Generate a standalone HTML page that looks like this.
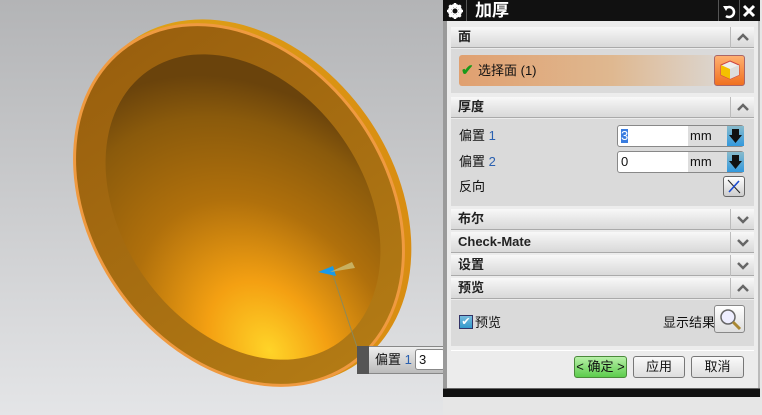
<!DOCTYPE html>
<html><head><meta charset="utf-8"><style>
*{margin:0;padding:0;box-sizing:border-box}
html,body{width:762px;height:415px;overflow:hidden}
body{position:relative;font-family:"Liberation Sans","Noto Sans CJK SC",sans-serif;font-size:13px;line-height:16px;color:#111;background:linear-gradient(#b3b4b6,#e4e5e7)}
.a{position:absolute}
.hdr{position:absolute;left:451px;width:303px;height:21px;background:linear-gradient(#f8f8f8,#e6e6e6 55%,#d9d9d9);border-bottom:1px solid #aaa;font-weight:bold;font-size:13px;line-height:20px;padding:0 0 0 7px;color:#222}
.hdr svg{position:absolute;right:0;top:0;border-left:1px solid #bbb}
.body{position:absolute;left:451px;width:303px;background:#dadada}
.in{position:absolute;background:#fff;border:1px solid #888;border-radius:3px;height:22px;width:127px}
.btn{position:absolute;top:356px;height:22px;border:1px solid #777;border-radius:3px;background:linear-gradient(#fafafa,#ddd);text-align:center;line-height:20px;font-size:13px}
</style></head><body>
<svg class="a" style="left:0;top:0" width="443" height="415">
<defs>
<radialGradient id="g1" cx="0.25" cy="0.9" r="0.9"><stop offset="0" stop-color="#ffd428"/><stop offset="0.25" stop-color="#f4a012"/><stop offset="0.55" stop-color="#b0700c"/><stop offset="0.85" stop-color="#8a5a0c"/><stop offset="1" stop-color="#6a430c"/></radialGradient>
<linearGradient id="side" x1="0" y1="0" x2="1" y2="1"><stop offset="0" stop-color="#e0aa1a"/><stop offset="1" stop-color="#d78810"/></linearGradient>
<linearGradient id="rim" x1="0" y1="0" x2="0" y2="1"><stop offset="0" stop-color="#9a600e"/><stop offset="1" stop-color="#b27a14"/></linearGradient>
</defs>
<ellipse cx="245" cy="202" rx="149" ry="197" transform="rotate(-35 245 202)" fill="url(#side)"/>
<ellipse cx="239" cy="205" rx="149" ry="196" transform="rotate(-35 239 205)" fill="#ef9a40"/>
<ellipse cx="239" cy="205" rx="146" ry="193" transform="rotate(-35 239 205)" fill="url(#rim)"/>
<ellipse cx="243" cy="207" rx="121" ry="166" transform="rotate(-35 243 207)" fill="url(#g1)"/>
<line x1="333" y1="275" x2="357" y2="347" stroke="#8c8a5a" stroke-width="1"/>
<polygon points="318,272 333,266 336,276" fill="#1a9ae8"/>
<polygon points="330,272 352,262 355,268" fill="#c8b060"/>
</svg>
<div class="a" style="left:357px;top:346px;width:87px;height:28px;background:linear-gradient(#eee,#bbb);border:1px solid #888"></div>
<div class="a" style="left:357px;top:346px;width:12px;height:28px;background:#555"></div>
<div class="a" style="left:375px;top:352px">偏置 <span style="color:#2a60b0">1</span></div>
<div class="a" style="left:415px;top:349px;width:30px;height:21px;background:#fff;border:1px solid #888;border-radius:3px;padding-left:3px;line-height:19px">3</div>
<div class="a" style="left:443px;top:0;width:319px;height:415px;background:#e6e6e6"></div>
<div class="a" style="left:443px;top:0;width:317px;height:397px;background:#ececec;border-left:4px solid #9a9a9a;border-right:2px solid #bbb"></div>
<div class="a" style="left:443px;top:0;width:317px;height:21px;background:#111"></div>
<svg class="a" style="left:446px;top:2px" width="18" height="18"><circle cx="9" cy="9" r="5.5" fill="none" stroke="#fff" stroke-width="3"/><g stroke="#fff" stroke-width="2.5"><line x1="9" y1="1" x2="9" y2="17"/><line x1="1" y1="9" x2="17" y2="9"/><line x1="3.3" y1="3.3" x2="14.7" y2="14.7"/><line x1="14.7" y1="3.3" x2="3.3" y2="14.7"/></g><circle cx="9" cy="9" r="2.5" fill="#111"/></svg>
<div class="a" style="left:466px;top:0;width:1px;height:21px;background:#555"></div>
<div class="a" style="left:475px;top:0;color:#fff;font-weight:bold;font-size:17px;line-height:21px">加厚</div>
<div class="a" style="left:718px;top:0;width:1px;height:21px;background:#555"></div>
<div class="a" style="left:739px;top:0;width:1px;height:21px;background:#555"></div>
<svg class="a" style="left:720px;top:2px" width="18" height="18"><path d="M6 6 A5 5 0 1 1 6 14" fill="none" stroke="#fff" stroke-width="2.5"/><polygon points="3,4 9,4 6,9" fill="#fff"/></svg>
<svg class="a" style="left:741px;top:3px" width="16" height="16"><path d="M3 3 L13 13 M13 3 L3 13" stroke="#fff" stroke-width="3"/></svg>
<div class="a" style="left:443px;top:388px;width:317px;height:9px;background:#111;border-top:1px solid #666"></div>

<div class="hdr" style="top:27px">面<svg width="24" height="21"><path d="M7 13 L12 8 L17 13" fill="none" stroke="#666" stroke-width="2.5"/></svg></div>
<div class="body" style="top:49px;height:44px"></div>
<div class="a" style="left:459px;top:55px;width:255px;height:31px;border-radius:3px;background:linear-gradient(90deg,#e0a070,#dfb890 60%,#dcd4cc)"></div>
<div class="a" style="left:461px;top:63px;color:#1a9a1a;font-size:15px;font-weight:bold">✔</div>
<div class="a" style="left:478px;top:63px">选择面 (1)</div>
<div class="a" style="left:714px;top:55px;width:31px;height:31px;border:1px solid #a66;border-radius:3px;background:linear-gradient(#ffb070,#f07020)"></div>
<svg class="a" style="left:718px;top:58px" width="24" height="24"><polygon points="12,3 21,7 21,17 12,21 3,17 3,7" fill="#eee" stroke="#c44"/><polygon points="3,7 12,11 12,21 3,17" fill="#f5c000"/><polygon points="12,11 21,7 21,17 12,21" fill="#ddd"/></svg>

<div class="hdr" style="top:97px">厚度<svg width="24" height="21"><path d="M7 13 L12 8 L17 13" fill="none" stroke="#666" stroke-width="2.5"/></svg></div>
<div class="body" style="top:119px;height:87px"></div>
<div class="a" style="left:459px;top:128px">偏置 <span style="color:#2a60b0">1</span></div>
<div class="a" style="left:459px;top:154px">偏置 <span style="color:#2a60b0">2</span></div>
<div class="a" style="left:459px;top:179px">反向</div>
<div class="in" style="left:617px;top:125px"><div class="a" style="left:70px;top:0;width:56px;height:20px;background:#ddd"></div><div class="a" style="left:3px;top:3px;background:#3a7de0;color:#fff;line-height:14px">3</div><div class="a" style="left:72px;top:2px">mm</div><div class="a" style="left:109px;top:0;width:17px;height:20px;background:linear-gradient(#8bc,#39d)"><svg width="17" height="20"><polygon points="5,3 12,3 12,9 15,9 8.5,17 2,9 5,9" fill="#111"/></svg></div></div>
<div class="in" style="left:617px;top:151px"><div class="a" style="left:70px;top:0;width:56px;height:20px;background:#ddd"></div><div class="a" style="left:3px;top:2px">0</div><div class="a" style="left:72px;top:2px">mm</div><div class="a" style="left:109px;top:0;width:17px;height:20px;background:linear-gradient(#8bc,#39d)"><svg width="17" height="20"><polygon points="5,3 12,3 12,9 15,9 8.5,17 2,9 5,9" fill="#111"/></svg></div></div>
<div class="a" style="left:723px;top:176px;width:22px;height:21px;border:1px solid #666;border-radius:3px;background:linear-gradient(#fff,#ccc)"><svg width="20" height="19"><line x1="4" y1="3" x2="16" y2="16" stroke="#222"/><line x1="5" y1="15" x2="15" y2="4" stroke="#1a4ad0" stroke-width="1.6"/></svg></div>

<div class="hdr" style="top:209px">布尔<svg width="24" height="21"><path d="M7 8 L12 13 L17 8" fill="none" stroke="#666" stroke-width="2.5"/></svg></div>
<div class="hdr" style="top:232px">Check-Mate<svg width="24" height="21"><path d="M7 8 L12 13 L17 8" fill="none" stroke="#666" stroke-width="2.5"/></svg></div>
<div class="hdr" style="top:255px">设置<svg width="24" height="21"><path d="M7 8 L12 13 L17 8" fill="none" stroke="#666" stroke-width="2.5"/></svg></div>
<div class="hdr" style="top:278px">预览<svg width="24" height="21"><path d="M7 13 L12 8 L17 13" fill="none" stroke="#666" stroke-width="2.5"/></svg></div>
<div class="body" style="top:300px;height:46px"></div>
<div class="a" style="left:459px;top:315px;width:14px;height:14px;border:1px solid #336;background:linear-gradient(#7bd,#39c);color:#fff;font-size:11px;line-height:12px;text-align:center">✔</div>
<div class="a" style="left:475px;top:315px">预览</div>
<div class="a" style="left:663px;top:315px">显示结果</div>
<div class="a" style="left:714px;top:305px;width:31px;height:28px;border:1px solid #888;border-radius:3px;background:linear-gradient(#fff,#ddd)"><svg width="29" height="26"><circle cx="13" cy="11" r="7" fill="#eef" stroke="#666" stroke-width="1.5"/><line x1="18" y1="16" x2="25" y2="23" stroke="#a83" stroke-width="3"/></svg></div>
<div class="a" style="left:451px;top:350px;width:303px;height:1px;background:#fff"></div>
<div class="btn" style="left:574px;width:53px;background:linear-gradient(#b8f0a8,#5ccc4c);border-color:#4a8a3a">&lt; 确定 &gt;</div>
<div class="btn" style="left:633px;width:52px">应用</div>
<div class="btn" style="left:691px;width:53px">取消</div>
</body></html>
